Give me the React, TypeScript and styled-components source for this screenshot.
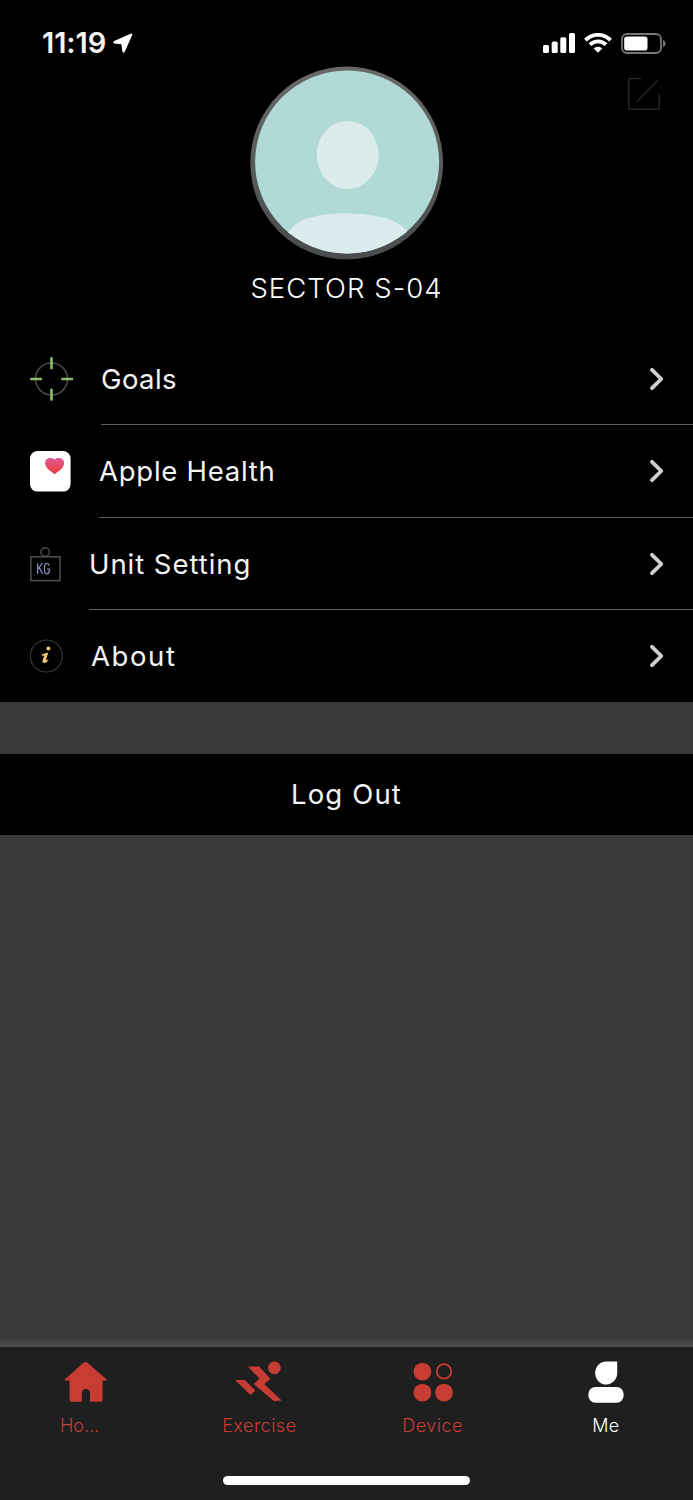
import React from "react";
import styled, { createGlobalStyle } from "styled-components";

const GlobalStyle = createGlobalStyle`
  *, *::before, *::after { box-sizing: border-box; }
  body { margin: 0; background: #393939; }
  svg { display: block; flex: none; }
`;

const Screen = styled.div`
  display: flex;
  flex-direction: column;
  width: 693px;
  height: 1500px;
  background: #393939;
  color: #f4f4f4;
  font-family: Inter, "Liberation Sans", sans-serif;
  overflow: hidden;
`;

const StatusBar = styled.header`
  display: flex;
  align-items: center;
  height: 66px;
  padding: 20px 27px 0 42px;
  background: #000;
`;

const Clock = styled.time`
  font-size: 29px;
  line-height: 46px;
  font-weight: 600;
  letter-spacing: -0.1px;
  width: 71px;
  white-space: nowrap;
`;

const StatusIcons = styled.div`
  display: flex;
  align-items: center;
  gap: 9px;
  margin-left: auto;
`;

const Profile = styled.section`
  position: relative;
  display: flex;
  flex-direction: column;
  align-items: center;
  height: 267px;
  background: #000;
`;

const EditButton = styled.button`
  position: absolute;
  top: 11px;
  right: 32px;
  padding: 0;
  border: 0;
  background: none;
`;

const UserName = styled.h1`
  margin: 10px 0 0;
  font-size: 27.5px;
  line-height: 36px;
  font-weight: 300;
  letter-spacing: 1.05px;
  color: #fff;
  white-space: nowrap;
`;

const Menu = styled.nav`
  display: grid;
  grid-template-rows: 92px 93px 92px 92px;
  background: #000;
`;

const MenuRow = styled.div`
  display: flex;
  align-items: center;
  padding-left: 30px;
`;

const RowBody = styled.div<{ $last?: boolean }>`
  display: flex;
  align-items: center;
  justify-content: space-between;
  flex: 1;
  align-self: stretch;
  margin-left: 28px;
  padding-right: 29px;
  border-bottom: ${(p) => (p.$last ? "0" : "1px solid #606060")};
`;

const RowLabel = styled.span<{ $spacing: number }>`
  font-size: 27.5px;
  line-height: 36px;
  font-weight: 400;
  letter-spacing: ${(p) => p.$spacing}px;
  white-space: nowrap;
`;

const LogOut = styled.button`
  height: 81px;
  margin: 52px 0 0;
  padding: 0 0 1px;
  border: 0;
  background: #000;
  color: #f4f4f4;
  font: 400 27.5px/36px Inter, "Liberation Sans", sans-serif;
  letter-spacing: 1.15px;
`;

const Shade = styled.div`
  height: 10px;
  margin-top: auto;
  background: linear-gradient(#393939, #505050);
`;

const TabBar = styled.footer`
  height: 153px;
  background: #1f1f1f;
`;

const Tabs = styled.div`
  display: grid;
  grid-template-columns: repeat(4, 1fr);
  height: 129px;
`;

const Tab = styled.div<{ $active?: boolean }>`
  display: flex;
  flex-direction: column;
  align-items: center;
  padding: 13px 1px 0 0;
  color: ${(p) => (p.$active ? "#fff" : "#c73d33")};
`;

const TabLabel = styled.span<{ $shift?: number; $spacing: number }>`
  margin-top: 10px;
  margin-right: ${(p) => p.$shift ?? 0}px;
  font-size: 18px;
  line-height: 24px;
  font-weight: 300;
  letter-spacing: ${(p) => p.$spacing}px;
  white-space: nowrap;
`;

const HomeIndicator = styled.div`
  width: 247px;
  height: 9px;
  margin: 0 auto;
  border-radius: 5px;
  background: #fff;
`;

const LocationArrow = () => (
  <svg width="20" height="20" viewBox="0 0 20 20" fill="#fff">
    <path d="M17.6.7 1.2 7.9C-.2 8.7 0 10.4 1.4 10.6l7 .6.9 7.1c.3 1.6 2 1.7 2.6.3L19.1 2.2C19.5 1 18.7.3 17.6.7Z" />
  </svg>
);

const Signal = () => (
  <svg width="32" height="20" viewBox="0 0 32 20" fill="#fff">
    <rect x="0" y="12" width="6" height="8" rx="1.6" />
    <rect x="8.7" y="8.6" width="6" height="11.4" rx="1.6" />
    <rect x="17.3" y="4.2" width="6" height="15.8" rx="1.6" />
    <rect x="26" y="0" width="6" height="20" rx="1.6" />
  </svg>
);

const Wifi = () => (
  <svg width="28" height="20" viewBox="0 0 28 20" fill="none" stroke="#fff" strokeWidth="3.8">
    <path d="M1.4 7.1C8.5.1 19.5.1 26.6 7.1" />
    <path d="M6 11.6c4.6-4.4 11.4-4.4 16 0" />
    <path d="M9.7 15.5c2.5-2.3 6.1-2.3 8.6 0L14 19.8Z" fill="#fff" stroke="none" />
  </svg>
);

const Battery = () => (
  <svg width="45" height="21" viewBox="0 0 45 21">
    <rect x="1" y="1" width="39" height="19" rx="5" fill="none" stroke="#777" strokeWidth="1.8" />
    <rect x="3.2" y="3.5" width="23.3" height="14" rx="2.8" fill="#fff" />
    <path d="M42 7c3.4 1 3.4 6.2 0 7.2Z" fill="#777" />
  </svg>
);

const EditIcon = () => (
  <svg width="34" height="34" viewBox="0 0 34 34" fill="none" stroke="#2c2c2c" strokeWidth="1.2">
    <path d="M14 1.6H1.8v30.6h30.4V17M10 24.3 30.5 3.5" />
  </svg>
);

const Avatar = () => (
  <svg width="194" height="194" viewBox="0 0 194 194">
    <defs>
      <clipPath id="face"><ellipse cx="97.1" cy="96" rx="92" ry="91.5" /></clipPath>
      <linearGradient id="rim" x1="0" y1="0" x2="0" y2="1">
        <stop offset="0" stopColor="#696969" />
        <stop offset="1" stopColor="#474d4c" />
      </linearGradient>
    </defs>
    <circle cx="96.7" cy="97" r="96.4" fill="url(#rim)" />
    <g clipPath="url(#face)">
      <path d="M0 0h194v194H0Z" fill="#b1dad6" />
      <ellipse cx="97.7" cy="89" rx="31" ry="34" fill="#dcebec" />
      <path d="M34 188V176C38 157 58 147 97 147.5s60 9 65 28v13Z" fill="#dcebee" />
    </g>
  </svg>
);

const GoalsIcon = () => (
  <svg width="43" height="44" viewBox="0 0 43 44" fill="none" strokeLinecap="round">
    <circle cx="21.5" cy="22" r="16" stroke="#484848" strokeWidth="1.6" />
    <path d="M21.5 1.4v9.8M21.5 32.8v9.8M1.2 22H11M32.4 22h9.6" stroke="#8fbd69" strokeWidth="2.6" />
  </svg>
);

const HealthIcon = () => (
  <svg width="41" height="41" viewBox="0 0 41 41">
    <defs>
      <linearGradient id="heart" x1="0" y1="0" x2="0" y2="1">
        <stop offset="0" stopColor="#e05a9c" />
        <stop offset="1" stopColor="#ef382c" />
      </linearGradient>
    </defs>
    <rect width="40.6" height="40.6" rx="7.5" fill="#fff" />
    <path d="M24.6 23.2c-5-3.6-9.5-6.8-9.5-11.2 0-5.4 6.2-6.2 9.5-3.6 3.3-2.6 9.5-1.8 9.5 3.6 0 4.4-4.5 7.6-9.5 11.2Z" fill="url(#heart)" />
  </svg>
);

const WeightIcon = () => (
  <svg width="31" height="35" viewBox="0 0 31 35" fill="none">
    <circle cx="15.2" cy="5" r="4.3" stroke="#444" strokeWidth="1.6" />
    <rect x=".8" y="9.8" width="29.2" height="23.8" stroke="#4b4b4b" strokeWidth="1.6" />
    <path d="M7.6 16.2v10.8M12.4 16.2l-4.8 6.2M9.3 20.6l3.4 6.4M19.3 18.8c-.5-1.6-1.3-2.4-2.5-2.4-3.2 0-3.2 10.4 0 10.4 1.5 0 2.5-1.1 2.5-2.7v-2h-2.3" stroke="#7f8bb8" strokeWidth="1.3" />
  </svg>
);

const AboutIcon = () => (
  <svg width="33" height="34" viewBox="0 0 33 34" fill="none">
    <circle cx="16.3" cy="17" r="16" stroke="#3a3a3a" strokeWidth="1.2" />
    <circle cx="18.4" cy="9.6" r="2" fill="#f0c878" />
    <path d="M12 15.2 18.2 13.4 15.9 21.2 18.6 20.2C17.6 22.6 16 24 14.2 24 12.6 24 12.2 22.8 12.7 21.2L14.2 16.4 11.8 16.8Z" fill="#f0c878" />
  </svg>
);

const Chevron = () => (
  <svg width="15" height="24" viewBox="0 0 15 24" fill="none" stroke="#cfcfcf" strokeWidth="3.8" strokeLinecap="round" strokeLinejoin="round">
    <path d="M3 2.8 12.3 12 3 21.2" />
  </svg>
);

const HomeIcon = () => (
  <svg width="44" height="44" viewBox="0 0 44 44" fill="currentColor">
    <path d="M19.8 2.5q1.7-1.2 3.4 0L42.5 19.3q.6 1.2-.5 1.3H38.6V40q0 1.8-1.8 1.8H26V33.3c0-5.6-8.2-5.6-8.2 0v8.5H7.3Q5.5 41.8 5.5 40V20.6H1.5q-1.3-.2-.6-1.3Z" />
  </svg>
);

const ExerciseIcon = () => (
  <svg width="48" height="44" viewBox="0 0 48 44" fill="currentColor">
    <circle cx="39.4" cy="7.9" r="6.3" />
    <path d="M12.8 6.4H24.2L35.4 19 29.2 23.9 46.6 40.6 39 41.2 18.8 24 24.6 18.6ZM0 20H9.8L20.4 30.5 15.6 35Z" />
  </svg>
);

const DeviceIcon = () => (
  <svg width="42" height="44" viewBox="0 0 42 44" fill="currentColor">
    <circle cx="10.4" cy="11.6" r="8.9" />
    <circle cx="10.4" cy="32.6" r="8.9" />
    <circle cx="32" cy="32.6" r="8.9" />
    <circle cx="32" cy="11.4" r="7.2" fill="none" stroke="currentColor" strokeWidth="1.8" />
  </svg>
);

const MeIcon = () => (
  <svg width="36" height="44" viewBox="0 0 36 44" fill="currentColor">
    <path d="M18.4 1.5H29.2V12.8A11 11.5 0 1 1 18.4 1.5Z" />
    <rect x=".4" y="27" width="35.2" height="15.8" rx="7" />
  </svg>
);

const rows = [
  { label: "Goals", icon: <GoalsIcon />, spacing: 0.4 },
  { label: "Apple Health", icon: <HealthIcon />, spacing: 0.75 },
  { label: "Unit Setting", icon: <WeightIcon />, spacing: 0.95 },
  { label: "About", icon: <AboutIcon />, spacing: 1.6 },
];

export default function App() {
  return (
    <Screen>
      <GlobalStyle />
      <StatusBar>
        <Clock>11:19</Clock>
        <LocationArrow />
        <StatusIcons>
          <Signal />
          <Wifi />
          <Battery />
        </StatusIcons>
      </StatusBar>
      <Profile>
        <Avatar />
        <UserName>SECTOR S-04</UserName>
        <EditButton aria-label="Edit profile"><EditIcon /></EditButton>
      </Profile>
      <Menu>
        {rows.map((row, i) => (
          <MenuRow key={row.label}>
            {row.icon}
            <RowBody $last={i === rows.length - 1}>
              <RowLabel $spacing={row.spacing}>{row.label}</RowLabel>
              <Chevron />
            </RowBody>
          </MenuRow>
        ))}
      </Menu>
      <LogOut>Log Out</LogOut>
      <Shade />
      <TabBar>
        <Tabs>
          <Tab><HomeIcon /><TabLabel $shift={13} $spacing={0}>Ho...</TabLabel></Tab>
          <Tab><ExerciseIcon /><TabLabel $spacing={0.5}>Exercise</TabLabel></Tab>
          <Tab><DeviceIcon /><TabLabel $spacing={0.5}>Device</TabLabel></Tab>
          <Tab $active><MeIcon /><TabLabel $spacing={0.4}>Me</TabLabel></Tab>
        </Tabs>
        <HomeIndicator />
      </TabBar>
    </Screen>
  );
}
